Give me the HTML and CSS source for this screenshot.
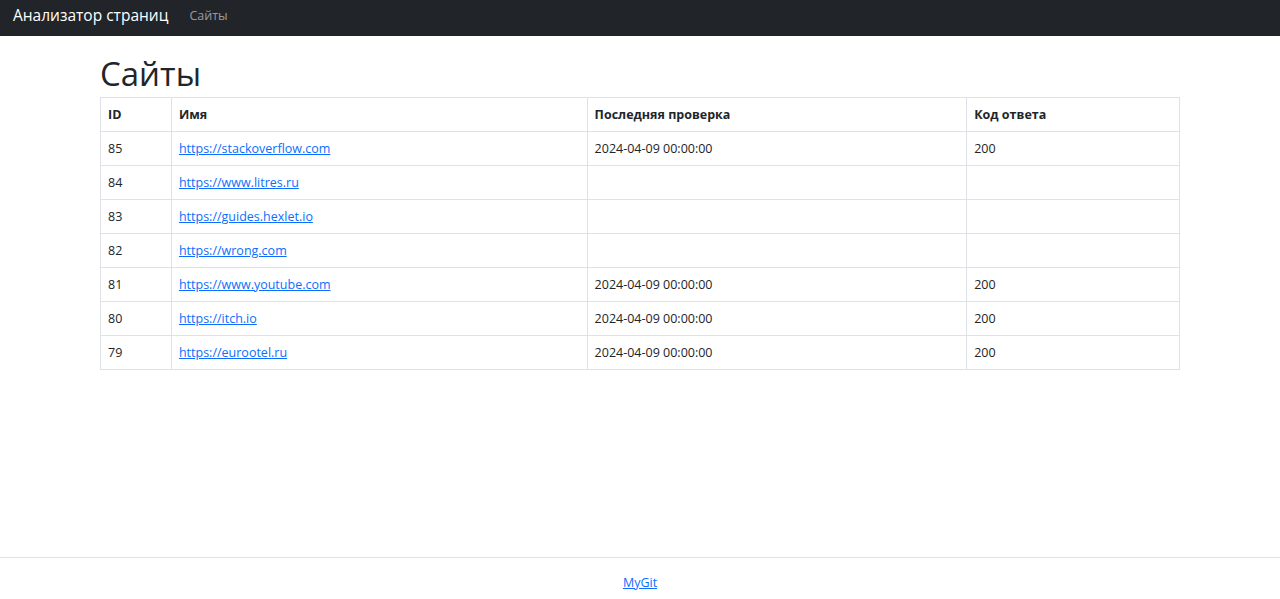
FILE: index.html
```html
<!DOCTYPE html>
<html lang="ru">
<head>
<meta charset="utf-8">
<title>Сайты</title>
<link rel="stylesheet" href="styles.css">
</head>
<body>
<div class="page">
  <nav class="navbar">
    <a class="brand" href="#">Анализатор страниц</a>
    <a class="nav-link" href="#">Сайты</a>
  </nav>
  <main class="container">
    <h1 class="title">Сайты</h1>
    <table class="table">
      <thead>
        <tr><th class="c-id">ID</th><th class="c-name">Имя</th><th class="c-date">Последняя проверка</th><th class="c-code">Код ответа</th></tr>
      </thead>
      <tbody>
        <tr><td>85</td><td><a href="#">https://stackoverflow.com</a></td><td>2024-04-09 00:00:00</td><td>200</td></tr>
        <tr><td>84</td><td><a href="#">https://www.litres.ru</a></td><td></td><td></td></tr>
        <tr><td>83</td><td><a href="#">https://guides.hexlet.io</a></td><td></td><td></td></tr>
        <tr><td>82</td><td><a href="#">https://wrong.com</a></td><td></td><td></td></tr>
        <tr><td>81</td><td><a href="#">https://www.youtube.com</a></td><td>2024-04-09 00:00:00</td><td>200</td></tr>
        <tr><td>80</td><td><a href="#">https://itch.io</a></td><td>2024-04-09 00:00:00</td><td>200</td></tr>
        <tr><td>79</td><td><a href="#">https://eurootel.ru</a></td><td>2024-04-09 00:00:00</td><td>200</td></tr>
      </tbody>
    </table>
  </main>
  <footer class="footer">
    <a href="#">MyGit</a>
  </footer>
</div>
</body>
</html>
```
FILE: styles.css
```css
* { box-sizing: border-box; }
html, body { margin: 0; padding: 0; }
body {
  font-family: "Open Sans", "Noto Sans", "DejaVu Sans", sans-serif;
  color: #212529;
  background: #fff;
  font-size: 12.5px;
}
.page {
  min-height: 599px;
  display: flex;
  flex-direction: column;
}
.navbar {
  background: #212529;
  height: 36px;
  display: flex;
  align-items: center;
  padding: 0 13px 5px;
  gap: 21px;
}
.brand {
  color: #fff;
  text-decoration: none;
  font-size: 15.5px;
  line-height: 1;
}
.nav-link {
  color: rgba(255,255,255,.55);
  text-decoration: none;
  font-size: 12.5px;
}
.container {
  flex: 1;
  width: 1080px;
  margin: 0 auto;
}
.title {
  margin: 17px 0 0;
  height: 44px;
  font-size: 33px;
  font-weight: 500;
  line-height: 41px;
}
.table {
  width: 1080px;
  border-collapse: collapse;
}
.table th, .table td {
  border: 1px solid #dee2e6;
  height: 34px;
  padding: 0 7px;
  text-align: left;
  vertical-align: middle;
  line-height: 20px;
}
.table th { font-weight: 700; }
.c-id { width: 71px; }
.c-name { width: 416px; }
.c-date { width: 380px; }
.c-code { width: 213px; }
a { color: #0d6efd; }
.footer {
  border-top: 1px solid #dee2e6;
  height: 42px;
  display: flex;
  align-items: center;
  justify-content: center;
  padding-top: 7px;
}
```
